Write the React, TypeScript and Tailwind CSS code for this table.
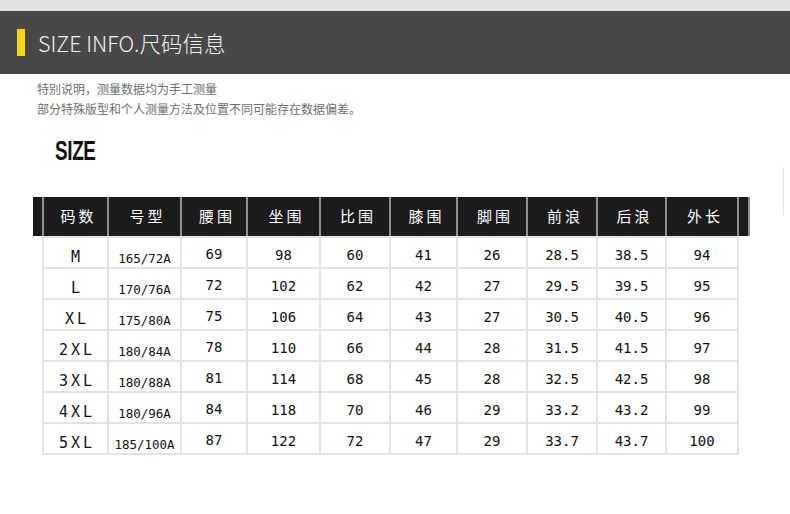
import React from "react";

const headers = ["码数", "号型", "腰围", "坐围", "比围", "膝围", "脚围", "前浪", "后浪", "外长"];
const widthCls = [
  "w-[63px]",
  "w-[71px]",
  "w-[64px]",
  "w-[71px]",
  "w-[68px]",
  "w-[65px]",
  "w-[68px]",
  "w-[68px]",
  "w-[67px]",
  "w-[70px]",
];
const offsetCls = [
  "pt-[12px] text-[15px] tracking-[3px] pl-[3px]",
  "pt-[15px] text-[12.5px]",
  "pt-[9px] text-[14px]",
  "pt-[10px] text-[14px]",
  "pt-[10px] text-[14px]",
  "pt-[10px] text-[14px]",
  "pt-[10px] text-[14px]",
  "pt-[10px] text-[14px]",
  "pt-[10px] text-[14px]",
  "pt-[10px] text-[14px]",
];

const rows = [
  ["M", "165/72A", "69", "98", "60", "41", "26", "28.5", "38.5", "94"],
  ["L", "170/76A", "72", "102", "62", "42", "27", "29.5", "39.5", "95"],
  ["XL", "175/80A", "75", "106", "64", "43", "27", "30.5", "40.5", "96"],
  ["2XL", "180/84A", "78", "110", "66", "44", "28", "31.5", "41.5", "97"],
  ["3XL", "180/88A", "81", "114", "68", "45", "28", "32.5", "42.5", "98"],
  ["4XL", "180/96A", "84", "118", "70", "46", "29", "33.2", "43.2", "99"],
  ["5XL", "185/100A", "87", "122", "72", "47", "29", "33.7", "43.7", "100"],
];

export default function App() {
  return (
    <div className="relative w-full min-h-[514px] bg-white overflow-hidden">
      <div className="h-[11px] bg-[#e2e2e2]" />
      <div className="h-[63px] bg-[#484848] flex items-center pl-[17px]">
        <div className="w-[8px] h-[27px] bg-[#fcd516]" />
        <div
          className="ml-[13px] text-[21.5px] leading-none text-[#f2f2f2] font-light"
          style={{ fontFamily: '"Noto Sans CJK SC", "Liberation Sans", sans-serif' }}
        >
          SIZE INFO.尺码信息
        </div>
      </div>

      <div
        className="pt-[5px] pl-[37px] text-[12px] leading-[20px] text-[#6e6e6e]"
        style={{ fontFamily: '"Noto Sans CJK SC", sans-serif' }}
      >
        <div>特别说明，测量数据均为手工测量</div>
        <div>部分特殊版型和个人测量方法及位置不同可能存在数据偏差。</div>
      </div>

      <div className="mt-[19px] pl-[55px] h-[27px]">
        <div
          className="text-[27px] leading-[27px] font-black text-[#111] scale-x-70 origin-left tracking-[-0.5px]"
          style={{ fontFamily: '"Liberation Sans", "DejaVu Sans", sans-serif' }}
        >
          SIZE
        </div>
      </div>

      <div className="mt-[32px] ml-[33px] flex flex-col">
        <div
          className="flex h-[39px] bg-[#8e8e8e] gap-[2px] w-[717px]"
          style={{ fontFamily: '"Noto Sans CJK SC", sans-serif' }}
        >
          <div className="w-[9px] bg-[#1b1b1b]" />
          {headers.map((h, i) => (
            <div
              key={h}
              className={`${widthCls[i]} bg-[#1b1b1b] flex items-center justify-center text-white text-[15px] tracking-[3px] pl-[6px]`}
            >
              {h}
            </div>
          ))}
          <div className="w-[9px] bg-[#1b1b1b]" />
        </div>

        <div
          className="ml-[9px] w-[697px] bg-[#e3e3e3] p-[2px] flex flex-col gap-[2px]"
          style={{ fontFamily: '"DejaVu Sans Mono", "Liberation Mono", monospace' }}
        >
          {rows.map((r) => (
            <div key={r[0]} className="flex gap-[2px]">
              {r.map((c, i) => (
                <div
                  key={i}
                  className={`${widthCls[i]} h-[29px] bg-white text-center leading-none text-[#111] ${offsetCls[i]}`}
                >
                  {c}
                </div>
              ))}
            </div>
          ))}
        </div>
      </div>

      <div className="absolute left-[783px] top-[167px] w-px h-[48px] bg-[#e4e4e4]" />
    </div>
  );
}
